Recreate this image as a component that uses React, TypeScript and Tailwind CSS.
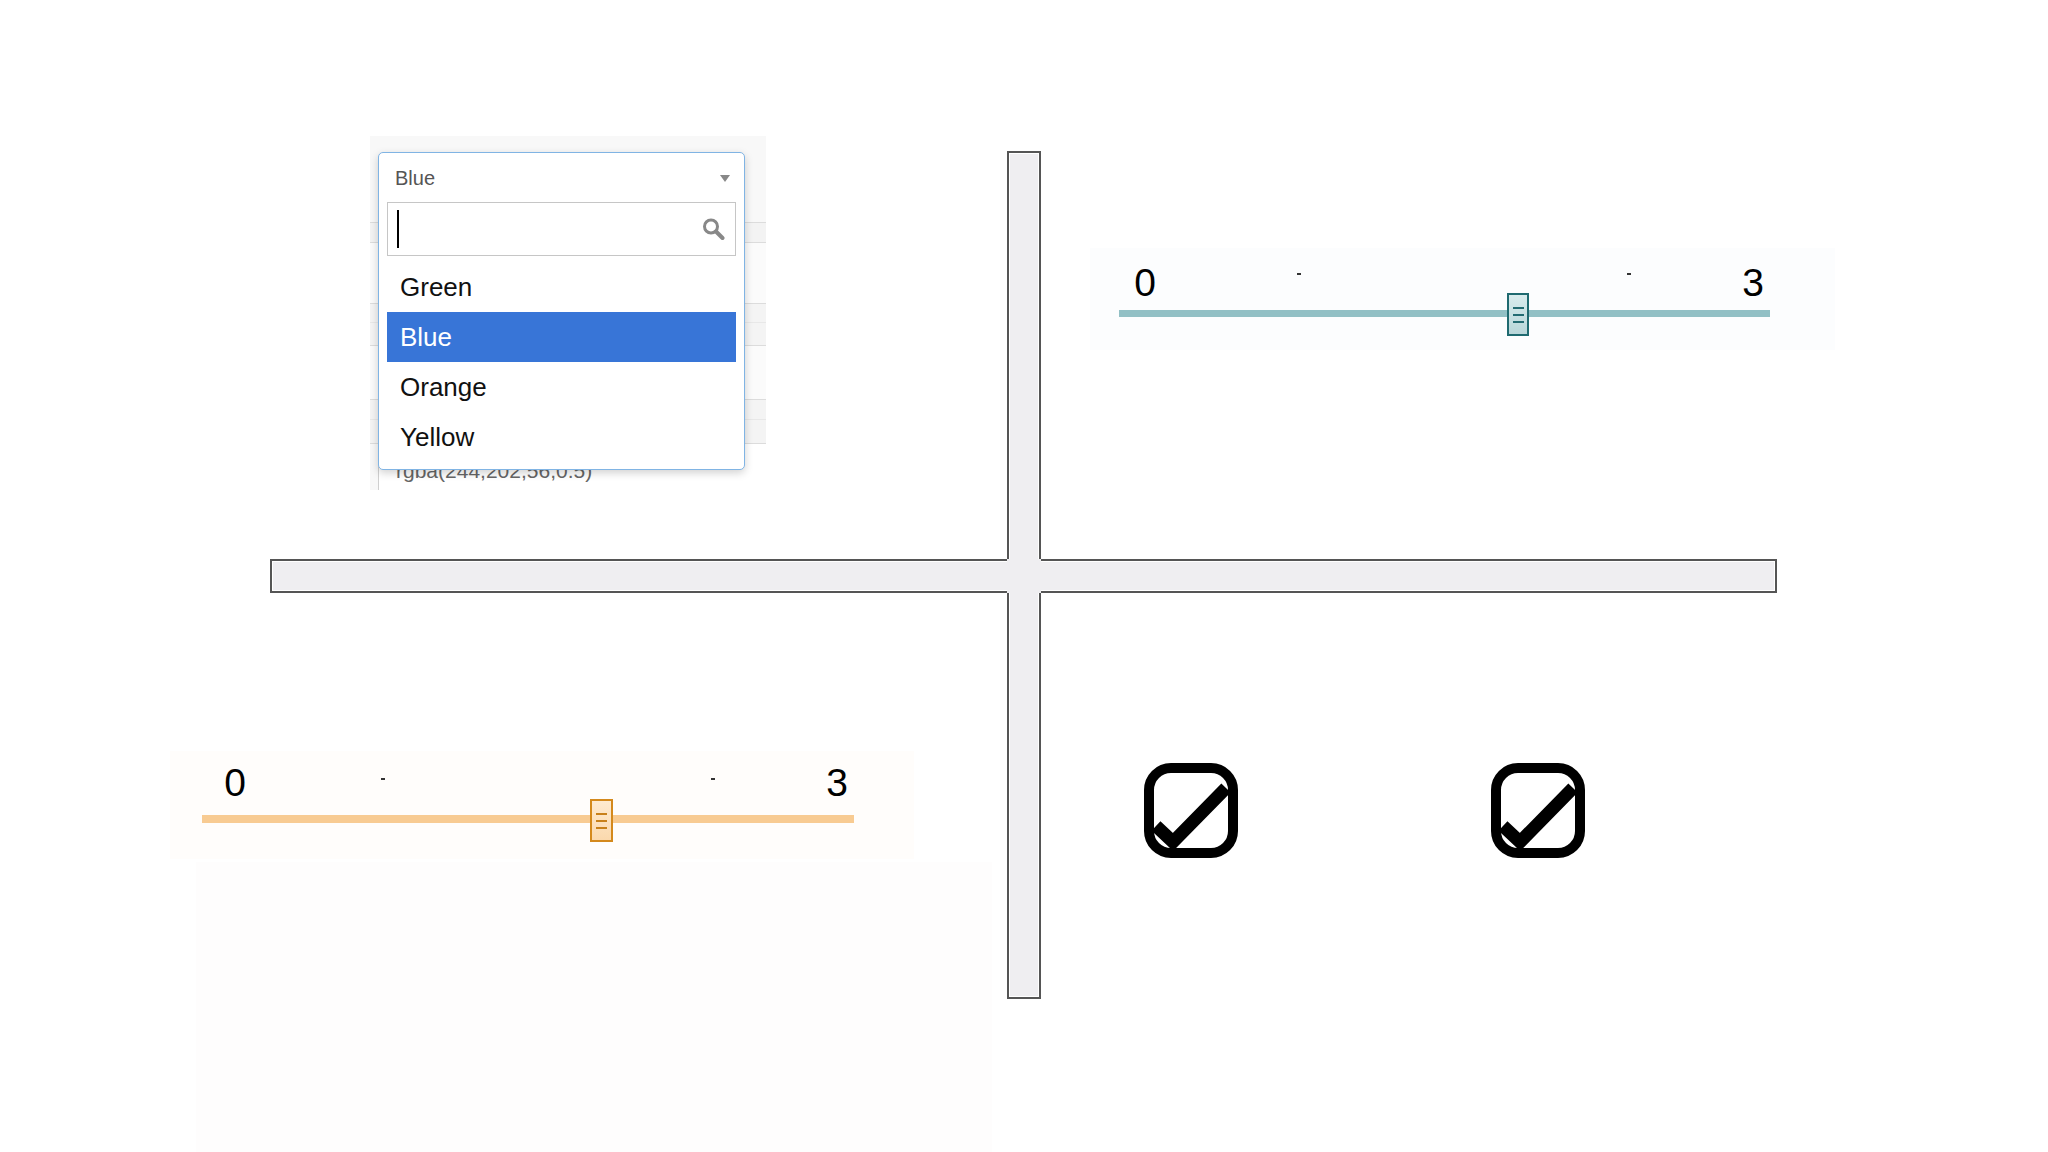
import React from "react";

function Thumb({ boxClass, lineClass }: { boxClass: string; lineClass: string }) {
  return (
    <div className={boxClass}>
      <div className="flex flex-col items-center gap-[5px] pt-[12px]">
        <div className={lineClass} />
        <div className={lineClass} />
        <div className={lineClass} />
      </div>
    </div>
  );
}

function CheckIcon() {
  return (
    <svg width="94" height="95" viewBox="0 0 94 95">
      <rect x="5" y="5" width="84" height="85" rx="22" fill="none" stroke="#000" strokeWidth="10" />
      <polyline
        points="12,63 29,79 82,25"
        fill="none"
        stroke="#000"
        strokeWidth="13"
        strokeLinejoin="miter"
        strokeLinecap="butt"
      />
    </svg>
  );
}

function Dropdown() {
  const options = ["Green", "Blue", "Orange", "Yellow"];
  return (
    <div className="relative w-[396px] h-[354px] bg-[#f8f8f8]">
      <div className="flex flex-col h-full">
        <div className="h-[86px]" />
        <div className="h-[21px] border-y border-[#dcdcdc] bg-[#f3f3f3]" />
        <div className="h-[60px] bg-[#fbfbfb]" />
        <div className="h-[43px] border-y border-[#dcdcdc] bg-[#f4f4f4]">
          <div className="h-[19px] border-b border-[#e8e8e8]" />
        </div>
        <div className="h-[53px] bg-[#fbfbfb]" />
        <div className="h-[45px] border-y border-[#dcdcdc] bg-[#f4f4f4]">
          <div className="h-[20px] border-b border-[#e8e8e8]" />
        </div>
        <div className="flex-1 ml-[8px] border-l border-[#cfcfcf] bg-white pl-[17px] pt-[15px] text-[21px] leading-[24px] text-[#666]">
          rgba(244,202,56,0.5)
        </div>
      </div>
      <div className="absolute left-[8px] top-[16px] w-[367px] h-[318px] bg-white border border-[#80b4e4] rounded-[5px] shadow-[0_3px_8px_rgba(0,0,0,0.18)] flex flex-col">
        <div className="h-[49px] flex items-center justify-between pl-[16px] pr-[14px]">
          <span className="text-[20px] leading-[24px] text-[#555]">Blue</span>
          <svg width="10" height="8" viewBox="0 0 10 8">
            <polygon points="0,1 10,1 5,8" fill="#888" />
          </svg>
        </div>
        <div className="mx-[8px] h-[54px] border border-[#c6c6c6] flex items-center justify-between pl-[9px] pr-[10px]">
          <div className="w-[2px] h-[38px] bg-black" />
          <svg width="24" height="24" viewBox="0 0 24 24">
            <circle cx="10" cy="9.5" r="6.5" fill="none" stroke="#888" strokeWidth="3" />
            <line x1="15" y1="14.5" x2="21.5" y2="21" stroke="#888" strokeWidth="4" strokeLinecap="round" />
          </svg>
        </div>
        <div className="mx-[8px] mt-[6px] flex flex-col">
          {options.map((o) => (
            <div
              key={o}
              className={
                o === "Blue"
                  ? "h-[50px] flex items-center pl-[13px] text-[26px] bg-[#3875d7] text-white"
                  : "h-[50px] flex items-center pl-[13px] text-[26px] text-[#111]"
              }
            >
              {o}
            </div>
          ))}
        </div>
      </div>
    </div>
  );
}

function TealSlider() {
  return (
    <div className="ml-[49px] mt-[248px] w-[745px] h-[102px] bg-[#fcfdfe] flex flex-col">
      <div className="ml-[29px] mt-[15px] w-[651px] h-[39px] flex items-start text-[39px] leading-[39px] text-black">
        <div className="w-[52px] text-center">0</div>
        <div className="ml-[126px] mt-[10px] w-[4px] h-[2px] bg-[#333]" />
        <div className="ml-[326px] mt-[10px] w-[4px] h-[2px] bg-[#333]" />
        <div className="ml-[105px] w-[34px] text-center">3</div>
      </div>
      <div className="relative ml-[29px] mt-[8px] w-[651px] h-[7px] bg-[#92c0c5]">
        <div className="absolute left-[388px] top-[-17px]">
          <Thumb
            boxClass="w-[22px] h-[43px] border-2 border-[#1f6a70] bg-gradient-to-b from-[#d9eced] to-[#b8d6d9]"
            lineClass="w-[11px] h-[2px] bg-[#236b72]"
          />
        </div>
      </div>
    </div>
  );
}

function OrangeSlider() {
  return (
    <div className="ml-[170px] mt-[158px] w-[744px] h-[108px] bg-[#fffdfb] flex flex-col">
      <div className="ml-[32px] mt-[12px] w-[652px] h-[39px] flex items-start text-[39px] leading-[39px] text-black">
        <div className="w-[66px] text-center">0</div>
        <div className="ml-[113px] mt-[15px] w-[4px] h-[2px] bg-[#333]" />
        <div className="ml-[326px] mt-[15px] w-[4px] h-[2px] bg-[#333]" />
        <div className="ml-[105px] w-[34px] text-center">3</div>
      </div>
      <div className="relative ml-[32px] mt-[13px] w-[652px] h-[8px] bg-[#f8cb92]">
        <div className="absolute left-[388px] top-[-16px]">
          <Thumb
            boxClass="w-[23px] h-[43px] border-2 border-[#d4891c] bg-gradient-to-b from-[#feead0] to-[#fbd9ad]"
            lineClass="w-[11px] h-[2px] bg-[#c8801a]"
          />
        </div>
      </div>
    </div>
  );
}

export default function App() {
  return (
    <div
      className="w-[2048px] h-[1152px] bg-white overflow-hidden grid grid-cols-[1007px_34px_1007px] grid-rows-[559px_34px_559px]"
      style={{ fontFamily: '"Liberation Sans", Arial, sans-serif' }}
    >
      <div className="pl-[370px] pt-[136px]">
        <Dropdown />
      </div>
      <div>
        <div className="mt-[151px] h-[408px] border-x-2 border-t-2 border-[#555] bg-[#efeef1]">
          <div className="h-full border-x border-t border-white" />
        </div>
      </div>
      <div className="flex flex-col">
        <TealSlider />
      </div>

      <div className="ml-[270px] h-[34px] border-y-2 border-l-2 border-[#555] bg-[#efeef1]">
        <div className="h-full border-y border-l border-white" />
      </div>
      <div className="bg-[#efeef1]" />
      <div className="mr-[271px] h-[34px] border-y-2 border-r-2 border-[#555] bg-[#efeef1]">
        <div className="h-full border-y border-r border-white" />
      </div>

      <div className="flex flex-col h-full">
        <OrangeSlider />
        <div className="ml-[196px] mt-[3px] w-[796px] flex-1 bg-[#fefdfd]" />
      </div>
      <div>
        <div className="h-[406px] border-x-2 border-b-2 border-[#555] bg-[#efeef1]">
          <div className="h-full border-x border-b border-white" />
        </div>
      </div>
      <div className="pl-[103px] pt-[170px] flex items-start gap-[253px]">
        <CheckIcon />
        <CheckIcon />
      </div>
    </div>
  );
}
